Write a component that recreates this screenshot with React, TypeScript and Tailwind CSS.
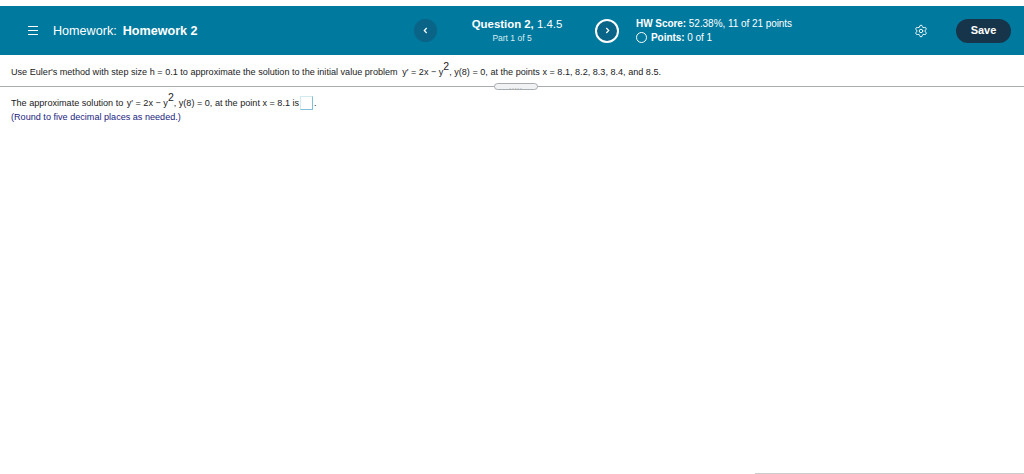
import { Settings } from "lucide-react";

function Sq() {
  return <sup className="text-[10.5px] leading-none relative top-[-5px] align-baseline">2</sup>;
}

export default function App() {
  return (
    <div className="h-[474px] w-[1024px] overflow-hidden bg-white flex flex-col font-['Liberation_Sans',Arial,sans-serif]">
      <div className="h-[6px]" />
      <header className="h-[49px] bg-[#00799e] text-white flex items-center">
        <div className="w-[28px]" />
        <svg width="10" height="9" viewBox="0 0 10 9" className="text-white">
          <path d="M0 .5h10M0 4.5h10M0 8.5h10" stroke="currentColor" strokeWidth="1" />
        </svg>
        <div className="ml-[15px] w-[361px] text-[12.6px] leading-[15px] mt-[1px] whitespace-nowrap">
          Homework:<span className="ml-[6px] font-bold">Homework 2</span>
        </div>
        <button className="w-[23px] h-[23px] rounded-full bg-[#0a6487] flex items-center justify-center">
          <svg width="5" height="7" viewBox="0 0 5 7"><path d="M3.7 1 1.3 3.5l2.4 2.5" fill="none" stroke="white" strokeWidth="1.2" /></svg>
        </button>
        <div className="w-[158px] flex flex-col items-center">
          <div className="text-[11.4px] leading-[14px] whitespace-nowrap pl-[2px]"><span className="font-bold">Question 2,</span> 1.4.5</div>
          <div className="text-[8.5px] leading-[12px] text-[#d9edf3] mt-[1px] pr-[8px]">Part 1 of 5</div>
        </div>
        <button className="w-[24px] h-[24px] rounded-full bg-[#0a6487] border-2 border-white flex items-center justify-center">
          <svg width="5" height="7" viewBox="0 0 5 7"><path d="M1.3 1l2.4 2.5L1.3 6" fill="none" stroke="white" strokeWidth="1.2" /></svg>
        </button>
        <div className="ml-[17px] w-[278px]">
          <div className="text-[10px] tracking-[-0.05px] leading-[14px] whitespace-nowrap"><span className="font-bold">HW Score:</span> 52.38%, 11 of 21 points</div>
          <div className="flex items-center text-[10px] tracking-[-0.05px] leading-[14px] whitespace-nowrap">
            <span className="w-[11px] h-[11px] rounded-full border-[1.5px] border-white mr-[4px]" />
            <span><span className="font-bold">Points:</span> 0 of 1</span>
          </div>
        </div>
        <Settings size={14} strokeWidth={1.6} className="text-white" />
        <button className="ml-[28px] w-[55px] h-[24px] rounded-full bg-[#17354a] text-white text-[11px] font-bold">Save</button>
      </header>
      <div className="flex-1 flex flex-col">
        <p className="ml-[11px] mt-[10px] text-[9.1px] leading-[14px] text-[#222] whitespace-nowrap">
          Use Euler's method with step size h = 0.1 to approximate the solution to the initial value problem <span className="ml-[2px]">y′ = 2x − y</span><Sq />, y(8) = 0, at the points x = 8.1, 8.2, 8.3, 8.4, and 8.5.
        </p>
        <div className="mt-[4px] h-[7px] flex items-center justify-center relative">
          <div className="absolute inset-x-0 top-[3px] h-px bg-[#a8adb2]" />
          <div className="relative w-[44px] h-[7px] ml-[8px] rounded-full border border-[#a8adb2] bg-[#f1f2f4] flex items-center justify-center text-[6px] leading-none tracking-[1px] text-[#555]">.....</div>
        </div>
        <p className="ml-[11px] mt-[6px] text-[9.1px] leading-[14px] text-[#222] whitespace-nowrap flex items-center">
          <span>The approximate solution to <span className="ml-[1px]">y′ = 2x − y</span><Sq />, y(8) = 0, at the point x = 8.1 is</span>
          <span className="inline-block ml-[1px] w-[13px] h-[14px] border border-[#d5e9f1] border-b-[#7fc0d8] border-r-[#7fc0d8]" />
          <span className="ml-[1px]">.</span>
        </p>
        <p className="ml-[11px] mt-[1px] text-[9.1px] leading-[13px] text-[#1a237e] whitespace-nowrap">(Round to five decimal places as needed.)</p>
      </div>
      <div className="self-end w-[269px] h-px bg-[#cccccc]" />
    </div>
  );
}
